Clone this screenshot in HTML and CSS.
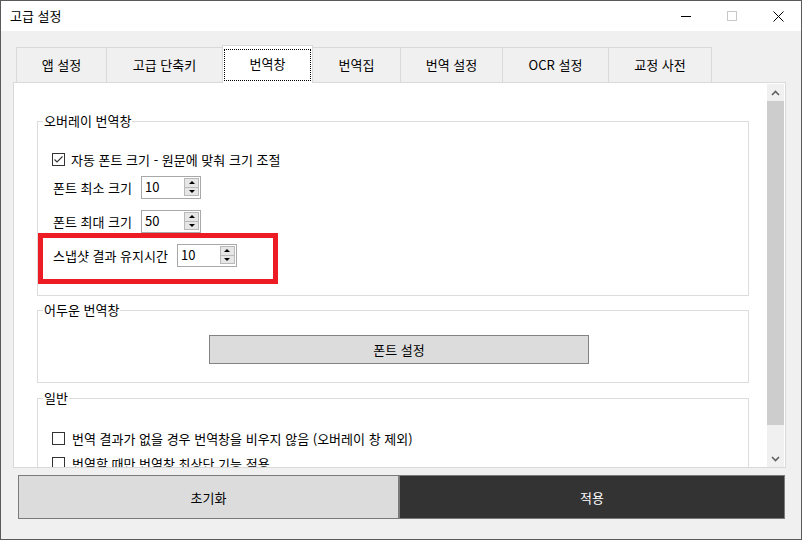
FILE: index.html
```html
<!DOCTYPE html>
<html lang="ko">
<head>
<meta charset="utf-8">
<title>고급 설정</title>
<link rel="stylesheet" href="styles.css">
</head>
<body>
<div class="window">
  <header class="titlebar">
    <span class="title">고급 설정</span>
    <div class="controls">
      <span class="ctl"><svg width="10" height="10" viewBox="0 0 10 10"><path d="M0 5.5H10" stroke="#000" stroke-width="1"/></svg></span>
      <span class="ctl"><svg width="10" height="10" viewBox="0 0 10 10"><rect x="0.5" y="0.5" width="9" height="9" fill="none" stroke="#c8c8c8"/></svg></span>
      <span class="ctl"><svg width="11" height="11" viewBox="0 0 11 11"><path d="M0.5 0.5L10.5 10.5M10.5 0.5L0.5 10.5" stroke="#000" stroke-width="1"/></svg></span>
    </div>
  </header>
  <main class="body">
    <nav class="tabs">
      <div class="tab t1">앱 설정</div>
      <div class="tab t2">고급 단축키</div>
      <div class="tab t3 active">번역창</div>
      <div class="tab t4">번역집</div>
      <div class="tab t5">번역 설정</div>
      <div class="tab t6">OCR 설정</div>
      <div class="tab t7">교정 사전</div>
    </nav>
    <section class="panel">
      <div class="scroll">
        <fieldset class="group g-overlay">
          <legend>오버레이 번역창</legend>
          <div class="group-body">
            <div class="row row-check first">
              <span class="cb"><svg width="13" height="13" viewBox="0 0 13 13"><path d="M2.5 6.5L5 9L10.5 3.5" fill="none" stroke="#333" stroke-width="1.1"/></svg></span>
              <span>자동 폰트 크기 - 원문에 맞춰 크기 조절</span>
            </div>
            <div class="row row-spin r2">
              <span class="lbl">폰트 최소 크기</span>
              <div class="spin"><span class="spin-val">10</span><span class="spin-btns"><span class="spin-btn up"></span><span class="spin-btn down"></span></span></div>
            </div>
            <div class="row row-spin r3">
              <span class="lbl">폰트 최대 크기</span>
              <div class="spin"><span class="spin-val">50</span><span class="spin-btns"><span class="spin-btn up"></span><span class="spin-btn down"></span></span></div>
            </div>
            <div class="row row-spin r4">
              <span class="lbl">스냅샷 결과 유지시간</span>
              <div class="spin"><span class="spin-val">10</span><span class="spin-btns"><span class="spin-btn up"></span><span class="spin-btn down"></span></span></div>
              <span class="highlight"></span>
            </div>
          </div>
        </fieldset>
        <fieldset class="group g-dark">
          <legend>어두운 번역창</legend>
          <div class="group-body">
            <button class="font-btn">폰트 설정</button>
          </div>
        </fieldset>
        <fieldset class="group g-general">
          <legend>일반</legend>
          <div class="group-body">
            <div class="row row-check gen1">
              <span class="cb"></span>
              <span>번역 결과가 없을 경우 번역창을 비우지 않음 (오버레이 창 제외)</span>
            </div>
            <div class="row row-check gen2">
              <span class="cb"></span>
              <span>번역할 때만 번역창 최상단 기능 적용</span>
            </div>
          </div>
        </fieldset>
      </div>
      <div class="scrollbar">
        <span class="sb-arrow"><svg width="9" height="6" viewBox="0 0 9 6"><path d="M1 5L4.5 1.5L8 5" fill="none" stroke="#606060" stroke-width="1.6"/></svg></span>
        <span class="sb-thumb"></span>
        <span class="sb-track"></span>
        <span class="sb-arrow"><svg width="9" height="6" viewBox="0 0 9 6"><path d="M1 1L4.5 4.5L8 1" fill="none" stroke="#606060" stroke-width="1.6"/></svg></span>
      </div>
    </section>
    <div class="actions">
      <button class="btn reset">초기화</button>
      <button class="btn apply">적용</button>
    </div>
  </main>
</div>
</body>
</html>
```

FILE: styles.css
```css
html, body {
  margin: 0;
  padding: 0;
  background: #ffffff;
}

body {
  font-family: "Noto Sans CJK KR", "Noto Sans", sans-serif;
  font-size: 13px;
  color: #000;
}

.window {
  width: 802px;
  height: 540px;
  box-sizing: border-box;
  border: 1px solid #5a5a5a;
  display: flex;
  flex-direction: column;
  background: #f0f0f0;
}

/* title bar */
.titlebar {
  height: 30px;
  flex: none;
  background: #fff;
  display: flex;
  align-items: center;
  justify-content: space-between;
  padding-left: 9px;
}

.title {
  line-height: 16px;
}

.controls {
  display: flex;
  height: 30px;
}

.ctl {
  width: 46px;
  height: 30px;
  display: flex;
  align-items: center;
  justify-content: center;
}

/* body */
.body {
  flex: 1;
  padding: 14px 15px 0 12px;
  display: flex;
  flex-direction: column;
}

/* tabs */
.tabs {
  display: flex;
  align-items: flex-end;
  height: 37px;
  margin-left: 3px;
}

.tab {
  height: 35px;
  box-sizing: border-box;
  border: 1px solid #d9d9d9;
  border-bottom: none;
  border-right: none;
  background: #f0f0f0;
  display: flex;
  align-items: center;
  justify-content: center;
  line-height: 16px;
}

.t1 { width: 90px; }
.t2 { width: 116px; }
.t3 { width: 91px; }
.t4 { width: 88px; }
.t5 { width: 102px; }
.t6 { width: 106px; }
.t7 { width: 104px; border-right: 1px solid #d9d9d9; }

.tab.active {
  height: 38px;
  margin-bottom: -1px;
  margin-right: -1px;
  border-right: 1px solid #d9d9d9;
  background: #fff;
  position: relative;
  z-index: 1;
  padding-bottom: 1px;
}

.tab.active::after {
  content: "";
  position: absolute;
  left: 1px;
  right: 1px;
  top: 3px;
  bottom: 2px;
  border: 1px dotted #000;
}

/* panel */
.panel {
  height: 386px;
  box-sizing: border-box;
  border: 1px solid #d9d9d9;
  background: #fff;
  display: flex;
}

.scroll {
  flex: 1;
  overflow: hidden;
  padding-top: 30px;
}

.group {
  margin: 0 17px 0 23px;
  padding: 0;
  border: 1px solid #dcdcdc;
  min-width: 0;
}

.group legend {
  margin-left: 5px;
  padding: 0 1px;
  line-height: 16px;
}

.group-body {
  padding-left: 14px;
}

.g-overlay .group-body { padding-bottom: 28px; }
.g-dark { margin-top: 6px; }
.g-dark .group-body { padding-top: 17px; padding-bottom: 18px; }
.g-general { margin-top: 7px; }
.g-general .group-body { padding-bottom: 20px; }

.row {
  display: flex;
  align-items: center;
}

.row-check {
  height: 17px;
  gap: 6px;
}

.row-check.first { margin-top: 22px; }
.gen1 { margin-top: 24px; gap: 7px; }
.gen2 { margin-top: 8px; gap: 7px; }

.cb {
  width: 13px;
  height: 13px;
  box-sizing: border-box;
  border: 1px solid #333;
  background: #fff;
  flex: none;
  display: flex;
}

.cb svg {
  margin: -1px;
}

.row-spin {
  height: 23px;
  gap: 9px;
  position: relative;
}

.r2 { margin-top: 8px; }
.r3 { margin-top: 11px; }
.r4 { margin-top: 11px; }

.lbl {
  padding-left: 1px;
}

.spin {
  width: 60px;
  height: 23px;
  box-sizing: border-box;
  border: 1px solid #a8a8a8;
  background: #fff;
  display: flex;
}

.spin-val {
  flex: 1;
  padding-left: 3px;
  line-height: 20px;
}

.spin-btns {
  width: 15px;
  display: flex;
  flex-direction: column;
  padding: 1px 1px 2px 0;
}

.spin-btn {
  flex: 1;
  border: 1px solid #b9b9b9;
  background: #e6e6e6;
  display: flex;
  align-items: center;
  justify-content: center;
}

.spin-btn.down { border-top: none; }

.spin-btn.up::before,
.spin-btn.down::before {
  content: "";
  width: 0;
  height: 0;
  border-left: 3px solid transparent;
  border-right: 3px solid transparent;
}

.spin-btn.up::before { border-bottom: 3px solid #000; }
.spin-btn.down::before { border-top: 3px solid #000; }

.highlight {
  position: absolute;
  left: -14px;
  top: -11px;
  width: 240px;
  height: 51px;
  box-sizing: border-box;
  border: 5px solid #ed1c24;
}

.font-btn {
  display: block;
  margin-left: 157px;
  width: 380px;
  height: 29px;
  box-sizing: border-box;
  border: 1px solid #838383;
  background: #dcdcdc;
  font: inherit;
  color: #000;
  padding: 0;
}

/* scrollbar */
.scrollbar {
  width: 17px;
  flex: none;
  margin: 1px 1px 0 1px;
  background: #f0f0f0;
  display: flex;
  flex-direction: column;
}

.sb-arrow {
  height: 17px;
  flex: none;
  display: flex;
  align-items: center;
  justify-content: center;
}

.sb-thumb {
  height: 324px;
  flex: none;
  background: #cdcdcd;
}

.sb-track {
  flex: 1;
}

/* bottom actions */
.actions {
  display: flex;
  margin: 7px 0 0 5px;
}

.btn {
  height: 44px;
  box-sizing: border-box;
  border: 1px solid #7a7a7a;
  font: inherit;
  padding: 0;
}

.reset {
  width: 381px;
  background: #dcdcdc;
  color: #000;
}

.apply {
  width: 386px;
  background: #333333;
  color: #fff;
}
```
